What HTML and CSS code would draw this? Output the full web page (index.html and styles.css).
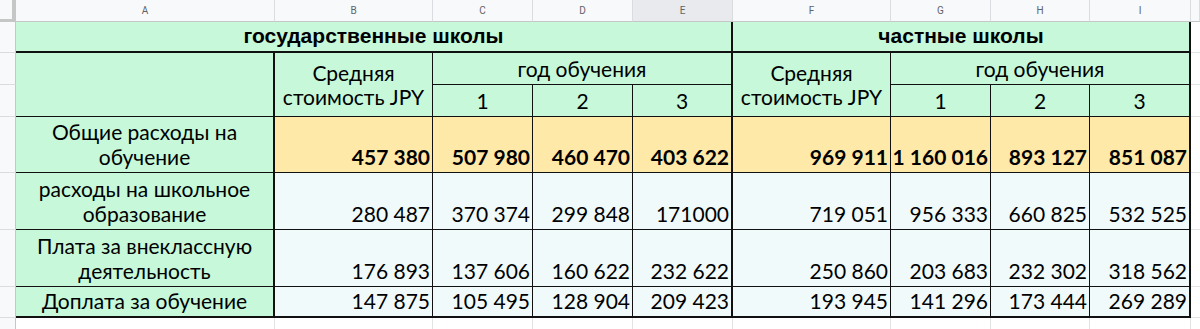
FILE: index.html
```html
<!DOCTYPE html>
<html lang="ru">
<head>
<meta charset="utf-8">
<title>Расходы на обучение</title>
<link rel="stylesheet" href="styles.css">
</head>
<body>
<div class="sheet">
  <!-- column header row -->
  <div class="corner"></div>
  <div class="colhdr">A</div>
  <div class="colhdr">B</div>
  <div class="colhdr">C</div>
  <div class="colhdr">D</div>
  <div class="colhdr selected">E</div>
  <div class="colhdr">F</div>
  <div class="colhdr">G</div>
  <div class="colhdr">H</div>
  <div class="colhdr">I</div>
  <div class="colhdr"></div>

  <!-- row 1 -->
  <div class="rowhdr"></div>
  <div class="c green title span5 thick-r thick-b">государственные школы</div>
  <div class="c green title span4 thick-r thick-b">частные школы</div>
  <div class="blank"></div>

  <!-- row 2 -->
  <div class="rowhdr"></div>
  <div class="c green rspan2 thick-r"></div>
  <div class="c green center middle rspan2">Средняя стоимость JPY</div>
  <div class="c green center span3 thick-r">год обучения</div>
  <div class="c green center middle rspan2">Средняя стоимость JPY</div>
  <div class="c green center span3 thick-r">год обучения</div>
  <div class="blank"></div>

  <!-- row 3 -->
  <div class="rowhdr"></div>
  <div class="c green center">1</div>
  <div class="c green center">2</div>
  <div class="c green center thick-r">3</div>
  <div class="c green center">1</div>
  <div class="c green center">2</div>
  <div class="c green center thick-r">3</div>
  <div class="blank"></div>

  <!-- row 4 -->
  <div class="rowhdr"></div>
  <div class="c green center label thick-r">Общие расходы на обучение</div>
  <div class="c yellow num bold">457 380</div>
  <div class="c yellow num bold">507 980</div>
  <div class="c yellow num bold">460 470</div>
  <div class="c yellow num bold thick-r">403 622</div>
  <div class="c yellow num bold">969 911</div>
  <div class="c yellow num bold">1 160 016</div>
  <div class="c yellow num bold">893 127</div>
  <div class="c yellow num bold thick-r">851 087</div>
  <div class="blank"></div>

  <!-- row 5 -->
  <div class="rowhdr"></div>
  <div class="c green center label thick-r">расходы на школьное образование</div>
  <div class="c pale num">280 487</div>
  <div class="c pale num">370 374</div>
  <div class="c pale num">299 848</div>
  <div class="c pale num thick-r">171000</div>
  <div class="c pale num">719 051</div>
  <div class="c pale num">956 333</div>
  <div class="c pale num">660 825</div>
  <div class="c pale num thick-r">532 525</div>
  <div class="blank"></div>

  <!-- row 6 -->
  <div class="rowhdr"></div>
  <div class="c green center label thick-r">Плата за внеклассную деятельность</div>
  <div class="c pale num">176 893</div>
  <div class="c pale num">137 606</div>
  <div class="c pale num">160 622</div>
  <div class="c pale num thick-r">232 622</div>
  <div class="c pale num">250 860</div>
  <div class="c pale num">203 683</div>
  <div class="c pale num">232 302</div>
  <div class="c pale num thick-r">318 562</div>
  <div class="blank"></div>

  <!-- row 7 -->
  <div class="rowhdr"></div>
  <div class="c green center label thick-r thick-b">Доплата за обучение</div>
  <div class="c pale num thick-b">147 875</div>
  <div class="c pale num thick-b">105 495</div>
  <div class="c pale num thick-b">128 904</div>
  <div class="c pale num thick-r thick-b">209 423</div>
  <div class="c pale num thick-b">193 945</div>
  <div class="c pale num thick-b">141 296</div>
  <div class="c pale num thick-b">173 444</div>
  <div class="c pale num thick-r thick-b">269 289</div>
  <div class="blank"></div>

  <!-- row 8 -->
  <div class="rowhdr"></div>
  <div class="empty"></div>
  <div class="empty"></div>
  <div class="empty"></div>
  <div class="empty"></div>
  <div class="empty"></div>
  <div class="empty"></div>
  <div class="empty"></div>
  <div class="empty"></div>
  <div class="empty"></div>
  <div class="empty last"></div>
</div>
</body>
</html>
```

FILE: styles.css
```css
html, body {
  margin: 0;
  padding: 0;
  background: #ffffff;
  width: 1200px;
  height: 329px;
  overflow: hidden;
}

.sheet {
  display: grid;
  grid-template-columns: 16px 259px 158px 100px 100px 100px 158px 100px 99px 101px 1fr;
  grid-template-rows: 22px 31px 32px 32px 56px 57px 57px 31px 12px;
  font-family: "Lato", "Noto Sans", sans-serif;
  font-size: 21px;
  color: #000000;
}

.corner {
  background: #f8f9fa;
  border-right: 4px solid #c4c7c5;
  border-bottom: 3px solid #c4c7c5;
}

.colhdr {
  background: #f8f9fa;
  border-right: 1px solid #dadce0;
  border-bottom: 1px solid #c4c7c5;
  font-family: Roboto, "Liberation Sans", sans-serif;
  font-size: 10px;
  color: #5f6368;
  display: flex;
  align-items: center;
  justify-content: center;
}

.colhdr.selected {
  background: #e8eaed;
}

.rowhdr {
  background: #f8f9fa;
  border-right: 1px solid #c4c7c5;
  border-bottom: 1px solid #dadce0;
}

.blank {
  border-bottom: 1px solid #e2e3e3;
}

.empty {
  border-right: 1px solid #e2e3e3;
}

.empty.last {
  border-right: 0;
}

.c {
  box-sizing: border-box;
  border-right: 1px solid #111111;
  border-bottom: 1px solid #111111;
  display: flex;
  align-items: flex-end;
  padding: 0 3px 3px 3px;
  line-height: 24px;
  white-space: normal;
  min-width: 0;
}

.green { background: #c6f8d9; }
.yellow { background: #ffe9a8; }
.pale { background: #f1fafa; }

.thick-r { border-right-width: 2px; }
.thick-b { border-bottom-width: 2px; }

.span5 { grid-column: span 5; }
.span4 { grid-column: span 4; }
.span3 { grid-column: span 3; }
.rspan2 { grid-row: span 2; }

.title {
  font-family: "Liberation Sans", Arial, sans-serif;
  font-weight: bold;
  font-size: 21px;
  justify-content: center;
  padding-bottom: 3px;
}

.center {
  justify-content: center;
  text-align: center;
}

.middle {
  align-items: center;
  padding-bottom: 0;
}

.num {
  justify-content: flex-end;
  white-space: nowrap;
  padding-right: 2px;
  padding-left: 0;
}

.bold { font-weight: bold; }

.label {
  line-height: 25px;
}
```
